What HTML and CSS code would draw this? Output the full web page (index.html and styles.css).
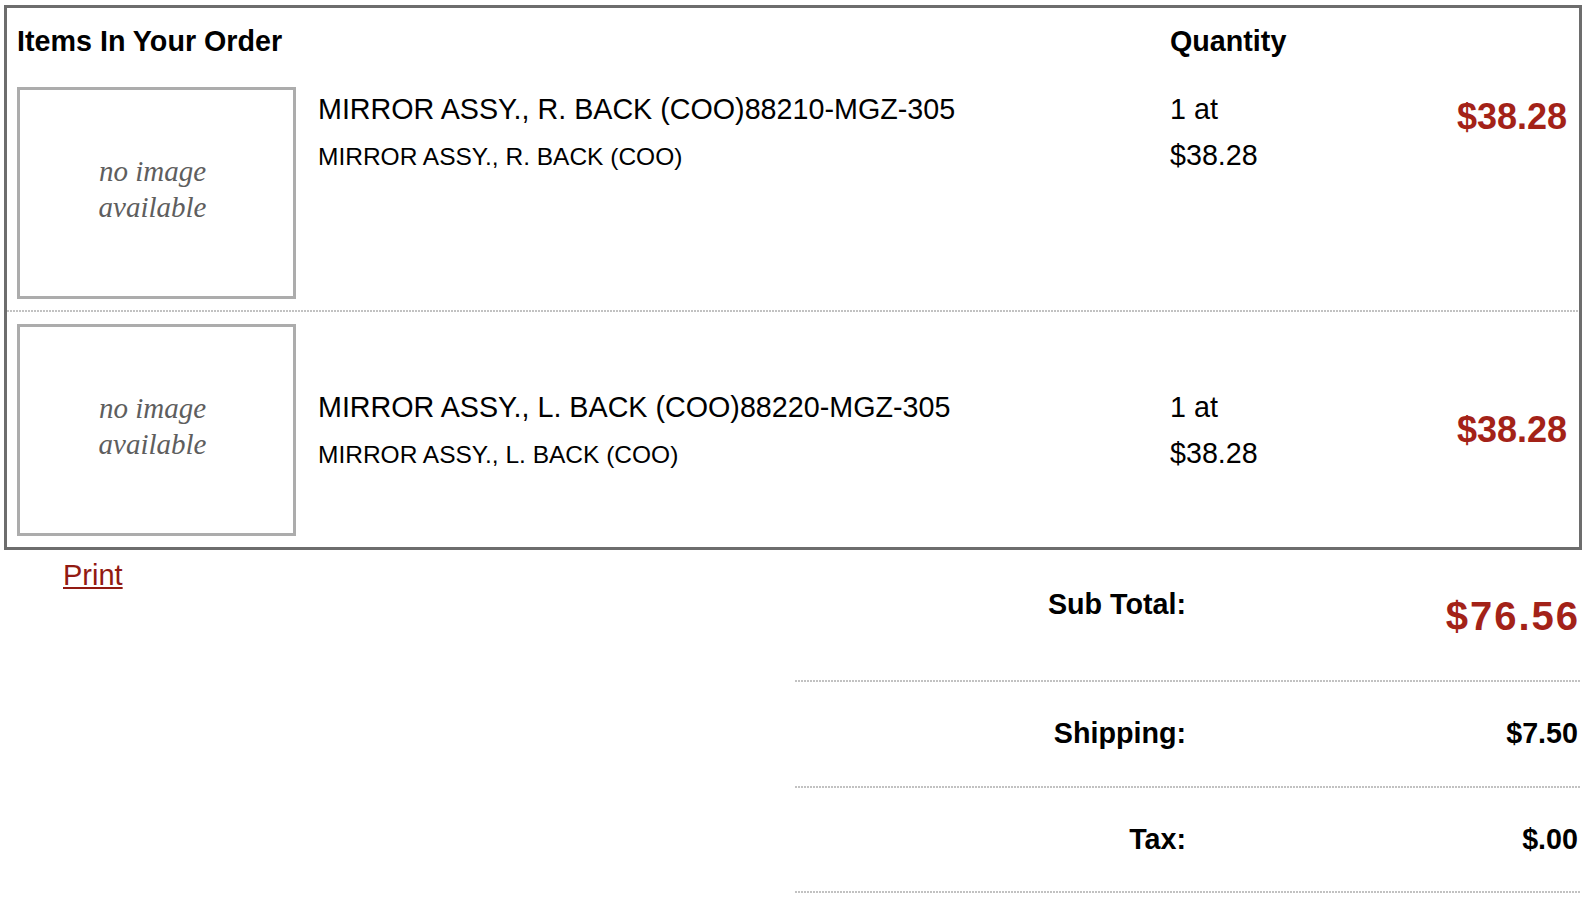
FILE: index.html
```html
<!DOCTYPE html>
<html lang="en">
<head>
<meta charset="utf-8">
<title>Items In Your Order</title>
<link rel="stylesheet" href="styles.css">
</head>
<body>
<div class="order-box">
  <div class="order-head">
    <div class="head-title">Items In Your Order</div>
    <div class="head-qty">Quantity</div>
  </div>

  <div class="item-row item-row--first">
    <div class="thumb"><div class="thumb-text">no image<br>available</div></div>
    <div class="item-info">
      <div class="item-name">MIRROR ASSY., R. BACK (COO)88210-MGZ-305</div>
      <div class="item-desc">MIRROR ASSY., R. BACK (COO)</div>
    </div>
    <div class="item-qty">
      <div>1 at</div>
      <div class="qty-each">$38.28</div>
    </div>
    <div class="item-total">$38.28</div>
  </div>

  <div class="dots"></div>

  <div class="item-row item-row--centered">
    <div class="thumb"><div class="thumb-text">no image<br>available</div></div>
    <div class="item-info">
      <div class="item-name">MIRROR ASSY., L. BACK (COO)88220-MGZ-305</div>
      <div class="item-desc">MIRROR ASSY., L. BACK (COO)</div>
    </div>
    <div class="item-qty">
      <div>1 at</div>
      <div class="qty-each">$38.28</div>
    </div>
    <div class="item-total">$38.28</div>
  </div>
</div>

<div class="below">
  <a class="print-link" href="#">Print</a>
  <div class="totals">
    <div class="total-row total-row--sub">
      <div class="t-label">Sub Total:</div>
      <div class="t-value t-value--big">$76.56</div>
    </div>
    <div class="dots"></div>
    <div class="total-row total-row--ship">
      <div class="t-label">Shipping:</div>
      <div class="t-value">$7.50</div>
    </div>
    <div class="dots"></div>
    <div class="total-row total-row--tax">
      <div class="t-label">Tax:</div>
      <div class="t-value">$.00</div>
    </div>
    <div class="dots"></div>
  </div>
</div>
</body>
</html>
```

FILE: styles.css
```css
body {
  margin: 0;
  background: #ffffff;
  color: #000000;
  font-family: "Liberation Sans", Arial, sans-serif;
}

.order-box {
  margin: 5px 10px 0 4px;
  border: 3px solid #6d6d6d;
}

.order-head {
  display: grid;
  grid-template-columns: 301px 852px 1fr;
  padding: 17px 12px 1px 10px;
  font-size: 28.7px;
  line-height: 32px;
  font-weight: 700;
}

.head-title {
  grid-column: 1 / 3;
  white-space: nowrap;
}

.item-row {
  display: grid;
  grid-template-columns: 301px 852px 1fr auto;
  padding: 12px 12px 11px 10px;
}

.item-row--first {
  padding-top: 29px;
  align-items: start;
}

.item-row--centered {
  align-items: center;
}

.thumb {
  width: 273px;
  height: 206px;
  border: 3px solid #acacac;
  display: flex;
  align-items: center;
  justify-content: center;
}

.thumb-text {
  margin: 0 8px 8px 0;
  font-family: "Liberation Serif", "Times New Roman", serif;
  font-style: italic;
  font-size: 29px;
  line-height: 36px;
  color: #5e5e5e;
  text-align: center;
}

.item-name {
  font-size: 28.7px;
  line-height: 32px;
  white-space: nowrap;
}

.item-desc {
  margin-top: 17px;
  font-size: 24.5px;
  line-height: 30px;
  white-space: nowrap;
}

.item-qty {
  font-size: 28.7px;
  line-height: 32px;
}

.qty-each {
  margin-top: 14px;
}

.item-total {
  font-size: 36px;
  line-height: 40px;
  font-weight: 700;
  color: #a32218;
  text-align: right;
}

.item-row--first .item-info,
.item-row--first .item-qty {
  padding-top: 6px;
}

.item-row--first .item-total {
  padding-top: 10px;
}

.dots {
  height: 2px;
  background: repeating-linear-gradient(90deg, #c2c2c2 0 2px, transparent 2px 3px);
}

.below {
  display: flex;
  align-items: flex-start;
  padding: 0 12px 0 63px;
}

.print-link {
  margin-top: 9px;
  font-size: 29px;
  line-height: 32px;
  color: #921a12;
  text-decoration: underline;
}

.totals {
  margin-left: auto;
  width: 785px;
}

.total-row {
  display: grid;
  grid-template-columns: 391px 1fr;
  align-items: start;
  font-size: 28.7px;
  line-height: 32px;
  font-weight: 700;
}

.total-row--sub {
  padding: 38px 0 42px;
}

.total-row--ship {
  padding: 35px 0 37px;
}

.total-row--tax {
  padding: 35px 0 36px;
}

.t-label {
  text-align: right;
}

.t-value {
  text-align: right;
  padding-right: 2px;
}

.t-value--big {
  padding-top: 6px;
  margin-right: -2px;
  font-size: 40px;
  line-height: 44px;
  letter-spacing: 2px;
  color: #a32218;
}
```
